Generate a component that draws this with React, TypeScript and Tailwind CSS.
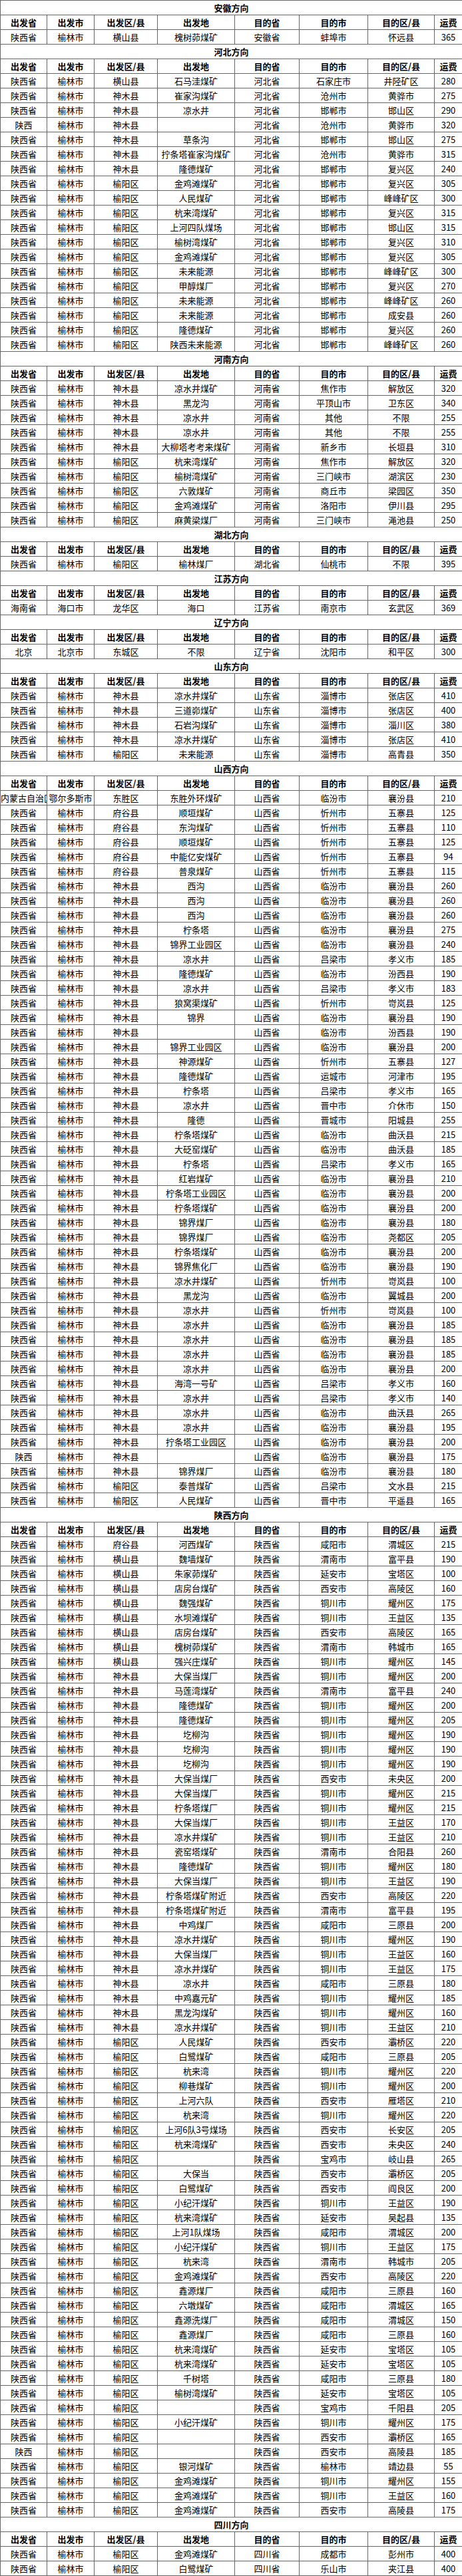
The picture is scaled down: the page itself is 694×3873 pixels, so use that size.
import React from "react";

const HEAD = ["出发省", "出发市", "出发区/县", "出发地", "目的省", "目的市", "目的区/县", "运费"];

type Section = { title: string; prov: string; rows: string[] };

const SECTIONS: Section[] = [
  { title: "安徽方向", prov: "安徽省", rows: ["横山县|槐树茆煤矿|蚌埠市|怀远县|365"] },
  {
    title: "河北方向",
    prov: "河北省",
    rows: [
      "横山县|石马洼煤矿|石家庄市|井陉矿区|280",
      "神木县|崔家沟煤矿|沧州市|黄骅市|275",
      "神木县|凉水井|邯郸市|邯山区|290",
      "!陕西|榆林市|神木县||河北省|沧州市|黄骅市|320",
      "神木县|草条沟|邯郸市|邯山区|275",
      "神木县|拧条塔崔家沟煤矿|沧州市|黄骅市|315",
      "神木县|隆德煤矿|邯郸市|复兴区|240",
      "榆阳区|金鸡滩煤矿|邯郸市|复兴区|305",
      "榆阳区|人民煤矿|邯郸市|峰峰矿区|300",
      "榆阳区|杭来湾煤矿|邯郸市|复兴区|315",
      "榆阳区|上河四队煤场|邯郸市|邯山区|315",
      "榆阳区|榆树湾煤矿|邯郸市|复兴区|310",
      "榆阳区|金鸡滩煤矿|邯郸市|复兴区|305",
      "榆阳区|未来能源|邯郸市|峰峰矿区|300",
      "榆阳区|甲醇煤厂|邯郸市|复兴区|270",
      "榆阳区|未来能源|邯郸市|峰峰矿区|260",
      "榆阳区|未来能源|邯郸市|成安县|260",
      "榆阳区|隆德煤矿|邯郸市|复兴区|260",
      "榆阳区|陕西未来能源|邯郸市|峰峰矿区|260",
    ],
  },
  {
    title: "河南方向",
    prov: "河南省",
    rows: [
      "神木县|凉水井煤矿|焦作市|解放区|320",
      "神木县|黑龙沟|平顶山市|卫东区|340",
      "神木县|凉水井|其他|不限|255",
      "神木县|凉水井|其他|不限|255",
      "神木县|大柳塔考考来煤矿|新乡市|长垣县|310",
      "榆阳区|杭来湾煤矿|焦作市|解放区|320",
      "榆阳区|榆树湾煤矿|三门峡市|湖滨区|230",
      "榆阳区|六敦煤矿|商丘市|梁园区|350",
      "榆阳区|金鸡滩煤矿|洛阳市|伊川县|295",
      "榆阳区|麻黄梁煤厂|三门峡市|渑池县|250",
    ],
  },
  { title: "湖北方向", prov: "湖北省", rows: ["榆阳区|榆林煤厂|仙桃市|不限|395"] },
  { title: "江苏方向", prov: "江苏省", rows: ["!海南省|海口市|龙华区|海口|江苏省|南京市|玄武区|369"] },
  { title: "辽宁方向", prov: "辽宁省", rows: ["!北京|北京市|东城区|不限|辽宁省|沈阳市|和平区|300"] },
  {
    title: "山东方向",
    prov: "山东省",
    rows: [
      "神木县|凉水井煤矿|淄博市|张店区|410",
      "神木县|三道峁煤矿|淄博市|张店区|400",
      "神木县|石岩沟煤矿|淄博市|淄川区|380",
      "神木县|凉水井煤矿|淄博市|张店区|410",
      "榆阳区|未来能源|淄博市|高青县|350",
    ],
  },
  {
    title: "山西方向",
    prov: "山西省",
    rows: [
      "!内蒙古自治区|鄂尔多斯市|东胜区|东胜外环煤矿|山西省|临汾市|襄汾县|210",
      "府谷县|顺垣煤矿|忻州市|五寨县|125",
      "府谷县|东沟煤矿|忻州市|五寨县|110",
      "府谷县|顺垣煤矿|忻州市|五寨县|125",
      "府谷县|中能亿安煤矿|忻州市|五寨县|94",
      "府谷县|普泉煤矿|忻州市|五寨县|115",
      "神木县|西沟|临汾市|襄汾县|260",
      "神木县|西沟|临汾市|襄汾县|260",
      "神木县|西沟|临汾市|襄汾县|260",
      "神木县|柠条塔|临汾市|襄汾县|275",
      "神木县|锦界工业园区|临汾市|襄汾县|240",
      "神木县|凉水井|吕梁市|孝义市|185",
      "神木县|隆德煤矿|临汾市|汾西县|190",
      "神木县|凉水井|吕梁市|孝义市|183",
      "神木县|狼窝渠煤矿|忻州市|岢岚县|125",
      "神木县|锦界|临汾市|襄汾县|190",
      "神木县||临汾市|汾西县|190",
      "神木县|锦界工业园区|临汾市|襄汾县|200",
      "神木县|神源煤矿|忻州市|五寨县|127",
      "神木县|隆德煤矿|运城市|河津市|195",
      "神木县|柠条塔|吕梁市|孝义市|165",
      "神木县|凉水井|晋中市|介休市|150",
      "神木县|隆德|晋城市|阳城县|255",
      "神木县|柠条塔煤矿|临汾市|曲沃县|215",
      "神木县|大砭窑煤矿|临汾市|曲沃县|185",
      "神木县|柠条塔|吕梁市|孝义市|165",
      "神木县|红岩煤矿|临汾市|襄汾县|210",
      "神木县|柠条塔工业园区|临汾市|襄汾县|200",
      "神木县|柠条塔煤矿|临汾市|襄汾县|200",
      "神木县|锦界煤厂|临汾市|襄汾县|180",
      "神木县|锦界煤厂|临汾市|尧都区|205",
      "神木县|柠条塔煤矿|临汾市|襄汾县|200",
      "神木县|锦界焦化厂|临汾市|襄汾县|190",
      "神木县|凉水井煤矿|忻州市|岢岚县|100",
      "神木县|黑龙沟|临汾市|翼城县|200",
      "神木县|凉水井|忻州市|岢岚县|100",
      "神木县|凉水井|临汾市|襄汾县|185",
      "神木县|凉水井|临汾市|襄汾县|185",
      "神木县|凉水井|临汾市|襄汾县|185",
      "神木县|凉水井|临汾市|襄汾县|200",
      "神木县|海湾一号矿|吕梁市|孝义市|160",
      "神木县|凉水井|吕梁市|孝义市|140",
      "神木县|凉水井|临汾市|曲沃县|265",
      "神木县|凉水井|临汾市|襄汾县|195",
      "神木县|拧条塔工业园区|临汾市|襄汾县|200",
      "!陕西|榆林市|神木县||山西省|临汾市|襄汾县|175",
      "神木县|锦界煤厂|临汾市|襄汾县|180",
      "榆阳区|泰普煤矿|吕梁市|文水县|215",
      "榆阳区|人民煤矿|晋中市|平遥县|165",
    ],
  },
  {
    title: "陕西方向",
    prov: "陕西省",
    rows: [
      "府谷县|河西煤矿|咸阳市|渭城区|215",
      "横山县|魏墙煤矿|渭南市|富平县|190",
      "横山县|朱家茆煤矿|延安市|宝塔区|100",
      "横山县|店房台煤矿|西安市|高陵区|160",
      "横山县|魏强煤矿|铜川市|耀州区|175",
      "横山县|水坝滩煤矿|铜川市|王益区|135",
      "横山县|店房台煤矿|西安市|高陵区|165",
      "横山县|槐树茆煤矿|渭南市|韩城市|165",
      "横山县|强兴庄煤矿|铜川市|耀州区|145",
      "神木县|大保当煤厂|铜川市|耀州区|200",
      "神木县|马莲湾煤矿|渭南市|富平县|240",
      "神木县|隆德煤矿|铜川市|耀州区|200",
      "神木县|隆德煤矿|铜川市|耀州区|205",
      "神木县|圪柳沟|铜川市|耀州区|190",
      "神木县|圪柳沟|铜川市|耀州区|190",
      "神木县|圪柳沟|铜川市|耀州区|190",
      "神木县|大保当煤厂|西安市|未央区|200",
      "神木县|大保当煤厂|铜川市|耀州区|215",
      "神木县|柠条塔煤厂|铜川市|耀州区|215",
      "神木县|大保当煤厂|铜川市|王益区|170",
      "神木县|凉水井煤矿|铜川市|王益区|210",
      "神木县|瓷窑塔煤矿|渭南市|合阳县|260",
      "神木县|隆德煤矿|铜川市|耀州区|180",
      "神木县|大保当煤厂|铜川市|王益区|190",
      "神木县|柠条塔煤矿附近|西安市|高陵区|220",
      "神木县|柠条塔煤矿附近|渭南市|富平县|195",
      "神木县|中鸡煤厂|咸阳市|三原县|200",
      "神木县|凉水井煤矿|铜川市|耀州区|190",
      "神木县|大保当煤厂|铜川市|王益区|160",
      "神木县|凉水井煤矿|铜川市|王益区|175",
      "神木县|凉水井|咸阳市|三原县|180",
      "神木县|中鸡嘉元矿|铜川市|耀州区|185",
      "神木县|黑龙沟煤矿|铜川市|耀州区|160",
      "神木县|凉水井煤矿|铜川市|王益区|210",
      "榆阳区|人民煤矿|西安市|灞桥区|220",
      "榆阳区|白鹭煤矿|咸阳市|三原县|205",
      "榆阳区|杭来湾|铜川市|耀州区|220",
      "榆阳区|柳巷煤矿|铜川市|耀州区|200",
      "榆阳区|上河六队|西安市|雁塔区|210",
      "榆阳区|杭来湾|铜川市|耀州区|220",
      "榆阳区|上河6队3号煤场|西安市|长安区|205",
      "榆阳区|杭来湾煤矿|西安市|未央区|240",
      "榆阳区||宝鸡市|岐山县|265",
      "榆阳区|大保当|西安市|灞桥区|205",
      "榆阳区|白鹭煤矿|西安市|阎良区|200",
      "榆阳区|小纪汗煤矿|铜川市|王益区|190",
      "榆阳区|杭来湾煤矿|延安市|吴起县|135",
      "榆阳区|上河1队煤场|咸阳市|渭城区|200",
      "榆阳区|小纪汗煤矿|铜川市|王益区|175",
      "榆阳区|杭来湾|渭南市|韩城市|205",
      "榆阳区|金鸡滩煤矿|西安市|高陵区|220",
      "榆阳区|鑫源煤厂|咸阳市|三原县|160",
      "榆阳区|六墩煤矿|咸阳市|渭城区|165",
      "榆阳区|鑫源洗煤厂|咸阳市|渭城区|150",
      "榆阳区|鑫源煤厂|咸阳市|三原县|160",
      "榆阳区|杭来湾煤矿|延安市|宝塔区|105",
      "榆阳区|杭来湾煤矿|延安市|宝塔区|105",
      "榆阳区|千树塔|咸阳市|三原县|180",
      "榆阳区|榆树湾煤矿|延安市|宝塔区|105",
      "榆阳区||宝鸡市|千阳县|205",
      "榆阳区|小纪汗煤矿|铜川市|耀州区|175",
      "榆阳区||西安市|灞桥区|165",
      "!陕西|榆林市|榆阳区||陕西省|西安市|高陵县|185",
      "榆阳区|银河煤矿|榆林市|靖边县|55",
      "榆阳区|金鸡滩煤矿|铜川市|耀州区|155",
      "榆阳区|金鸡滩煤矿|铜川市|王益区|160",
      "榆阳区|金鸡滩煤矿|西安市|高陵县|175",
    ],
  },
  {
    title: "四川方向",
    prov: "四川省",
    rows: ["榆阳区|金鸡滩煤矿|成都市|彭州市|400", "榆阳区|白鹭煤矿|乐山市|夹江县|400"],
  },
];

function parse(r: string, prov: string): string[] {
  if (r.startsWith("!")) return r.slice(1).split("|");
  const f = r.split("|");
  return ["陕西省", "榆林市", f[0], f[1], prov, f[2], f[3], f[4]];
}

const td =
  "h-[22px] border border-[#666666] p-0 text-center align-middle whitespace-nowrap overflow-hidden text-clip";

export default function App() {
  return (
    <div className="bg-white w-[694px]" style={{ fontFamily: '"Noto Sans CJK SC", "Noto Sans", sans-serif' }}>
      <table className="table-fixed border-collapse w-[694px] text-[13px] leading-[20px] text-black">
        <colgroup>
          <col className="w-[70px]" />
          <col className="w-[71px]" />
          <col className="w-[95px]" />
          <col className="w-[116px]" />
          <col className="w-[97px]" />
          <col className="w-[103px]" />
          <col className="w-[100px]" />
          <col className="w-[42px]" />
        </colgroup>
        <tbody>
          {SECTIONS.map((s) => (
            <React.Fragment key={s.title}>
              <tr>
                <td colSpan={8} className={td + " font-bold"}>
                  {s.title}
                </td>
              </tr>
              <tr>
                {HEAD.map((h) => (
                  <td key={h} className={td + " font-bold"}>
                    {h}
                  </td>
                ))}
              </tr>
              {s.rows.map((r, i) => (
                <tr key={i}>
                  {parse(r, s.prov).map((c, j) => (
                    <td key={j} className={td}>
                      {c}
                    </td>
                  ))}
                </tr>
              ))}
            </React.Fragment>
          ))}
        </tbody>
      </table>
    </div>
  );
}
